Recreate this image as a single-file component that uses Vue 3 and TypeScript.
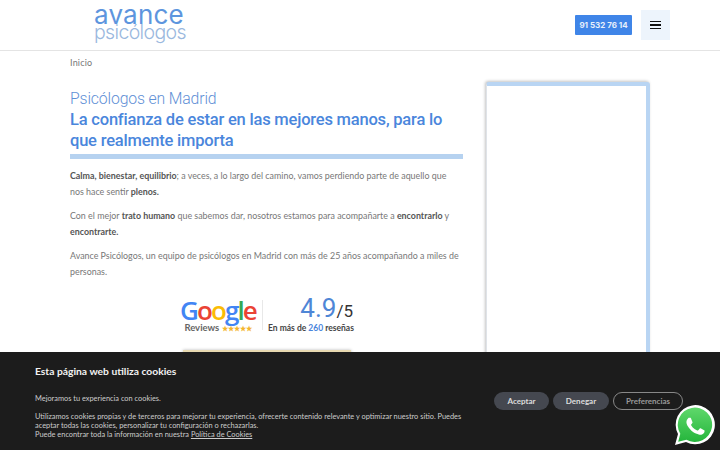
<script setup lang="ts">
const googleLetters: { c: string; col: string }[] = [
  { c: 'G', col: '#4285f4' },
  { c: 'o', col: '#ea4335' },
  { c: 'o', col: '#fbbc05' },
  { c: 'g', col: '#4285f4' },
  { c: 'l', col: '#34a853' },
  { c: 'e', col: '#ea4335' },
]
</script>

<template>
  <div class="page">
    <header class="header">
      <div class="logo">
        <div class="logo-top">avance</div>
        <div class="logo-bottom">psicólogos</div>
      </div>
      <div class="header-actions">
        <a class="phone">91 532 76 14</a>
        <button class="burger" aria-label="Menú">
          <span></span><span></span><span></span>
        </button>
      </div>
    </header>

    <div class="breadcrumb">Inicio</div>

    <main class="main">
      <section class="content">
        <h1 class="title">
          <span class="title-light">Psicólogos en Madrid</span>
          <strong class="title-strong">La confianza de estar en las mejores manos, para lo que realmente importa</strong>
        </h1>
        <div class="rule"></div>
        <p><b>Calma, bienestar, equilibrio</b>; a veces, a lo largo del camino, vamos perdiendo parte de aquello que nos hace sentir <b>plenos.</b></p>
        <p>Con el mejor <b>trato humano</b> que sabemos dar, nosotros estamos para acompañarte a <b>encontrarlo</b> y <b>encontrarte.</b></p>
        <p>Avance Psicólogos, un equipo de psicólogos en Madrid con más de 25 años acompañando a miles de personas.</p>

        <div class="reviews">
          <div class="google">
            <div class="google-word"><span v-for="(l, i) in googleLetters" :key="i" :style="{ color: l.col }">{{ l.c }}</span></div>
            <div class="google-sub">Reviews <span class="stars">★★★★★</span></div>
          </div>
          <div class="divider"></div>
          <div class="score">
            <div class="score-num"><span class="big">4.9</span><span class="out">/5</span></div>
            <div class="score-sub">En más de <span class="blue">260</span> reseñas</div>
          </div>
        </div>
        <div class="gold"></div>
      </section>

      <aside class="sidebar"></aside>
    </main>

    <div class="cookies">
      <div class="cookie-text">
        <div class="cookie-title">Esta página web utiliza cookies</div>
        <div class="cookie-lead">Mejoramos tu experiencia con cookies.</div>
        <div class="cookie-body">Utilizamos cookies propias y de terceros para mejorar tu experiencia, ofrecerte contenido relevante y optimizar nuestro sitio. Puedes aceptar todas las cookies, personalizar tu configuración o rechazarlas.<br />Puede encontrar toda la información en nuestra <u>Política de Cookies</u></div>
      </div>
      <div class="cookie-buttons">
        <button class="cbtn accept">Aceptar</button>
        <button class="cbtn deny">Denegar</button>
        <button class="cbtn prefs">Preferencias</button>
      </div>
    </div>

    <svg class="whatsapp" viewBox="0 0 40 40" aria-label="WhatsApp">
      <defs>
        <linearGradient id="wa" x1="0" y1="0" x2="0" y2="1">
          <stop offset="0" stop-color="#5fd86b" />
          <stop offset="1" stop-color="#25b53c" />
        </linearGradient>
      </defs>
      <path d="M0 40 L3 29 A19.6 19.6 0 1 1 11 37 Z" fill="#fff" />
      <path d="M3.2 36.8 L5.3 28.8 A17.2 17.2 0 1 1 11.4 34.7 Z" fill="url(#wa)" />
      <path d="M14 10.2c-.5-1-1-1-1.5-1h-1.3c-.5 0-1.200.2-1.800.9-.6.7-2.400 2.300-2.400 5.600s2.400 6.500 2.700 7c.3.400 4.700 7.500 11.600 10.200 5.700 2.300 6.900 1.800 8.100 1.700 1.200-.1 4-1.600 4.600-3.200.6-1.600.6-2.900.4-3.200-.2-.3-.6-.5-1.300-.8l-4.600-2.300c-.6-.2-1.100-.3-1.500.4l-2.100 2.600c-.4.4-.8.500-1.400.2-.7-.3-2.900-1.100-5.500-3.400-2-1.800-3.400-4-3.800-4.700-.4-.7 0-1 .3-1.400l1-1.200c.3-.4.400-.7.700-1.100.2-.5.100-.9-.1-1.200L14 10.200z" transform="translate(6.800 6.800) scale(.66)" fill="#fff" />
    </svg>
  </div>
</template>

<style>
html, body { margin: 0; padding: 0; height: 100%; overflow: hidden; background: #fff; }
</style>

<style scoped>
.page {
  width: 720px;
  height: 450px;
  position: relative;
  overflow: hidden;
  background: #fff;
  font-family: Lato, "Liberation Sans", sans-serif;
  color: #666;
}
.header {
  height: 50px;
  border-bottom: 1px solid #e4e4e4;
  display: flex;
  justify-content: space-between;
  padding: 0 50px 0 94px;
}
.logo { width: 92px; padding-top: 5px; font-family: Inter, sans-serif; }
.logo-top { font-size: 26px; line-height: 20px; color: #5d95de; letter-spacing: .2px; }
.logo-bottom { font-size: 19.500px; line-height: 15px; color: #9ab8de; font-weight: 300; letter-spacing: -.65px; }
.header-actions { display: flex; align-items: center; gap: 9px; }
.phone {
  width: 57px;
  height: 20px;
  background: #3f85e8;
  border-radius: 1px;
  color: #e8f0fb;
  font: 700 8px/20px Inter, sans-serif;
  text-align: center;
}
.burger {
  width: 29px;
  height: 30px;
  border: 0;
  background: #edf4fc;
  padding: 0;
  display: flex;
  flex-direction: column;
  align-items: center;
  justify-content: center;
  gap: 2px;
}
.burger span { width: 11px; height: 1.500px; background: #111; display: block; }
.breadcrumb { padding: 7px 70px 0; font: 400 9px/10px Lato, sans-serif; letter-spacing: .2px; color: #777; height: 11px; }
.main { display: flex; padding: 19px 70px 0; gap: 23px; align-items: flex-start; }
.content { width: 393px; flex: none; }
.title { margin: 0; font-size: 16.500px; line-height: 21px; font-weight: 400; font-family: Roboto, sans-serif; }
.title-light { display: block; color: #5f90d6; font-size: 15.800px; font-weight: 300; letter-spacing: -.15px; }
.title-strong { display: block; color: #4a86dc; font-weight: 500; letter-spacing: -.2px; }
.rule { height: 5px; background: #b6d2f0; margin-top: 3px; margin-bottom: 9px; }
p { margin: 0 0 8px; max-width: 390px; font: 400 8.900px/16px Lato, sans-serif; color: #777; }
b { font-weight: 700; color: #555; }
.reviews { display: flex; align-items: center; margin: 17px 0 0 110px; height: 36px; }
.google { width: 76px; text-align: center; }
.google-word { font: 600 26px/25px "Open Sans", sans-serif; letter-spacing: -1.900px; }
.google-sub { font: 700 9.500px/10px Lato, sans-serif; color: #666; white-space: nowrap; }
.stars { color: #f4b52e; font-size: 7px; }
.divider { width: 1px; height: 30px; background: #e8e8e8; margin: 0 5px 0 6px; }
.score { width: 85px; text-align: right; }
.score-num { line-height: 23px; font-family: Roboto, sans-serif; }
.big { font-size: 26px; color: #4f86d6; }
.out { font-size: 17px; color: #333; }
.score-sub { font: 700 8.500px/10px Lato, sans-serif; color: #444; white-space: nowrap; }
.blue { color: #4a86dc; }
.gold {
  width: 168px;
  height: 20px;
  margin: 17px 0 0 113px;
  background: #e7d9b0;
  box-shadow: 0 0 3px #bbb;
}
.sidebar {
  width: 159px;
  height: 300px;
  flex: none;
  margin-top: -6px;
  background: #fff;
  border-style: solid;
  border-color: #b9d5f3 #b9d5f3 #b9d5f3 #dfe3e8;
  border-width: 4px 4px 0 1px;
  border-radius: 3px;
  box-shadow: -1px -1px 3px #c4c4c4;
}
.cookies {
  position: absolute;
  left: 0;
  right: 0;
  bottom: 0;
  height: 98px;
  box-sizing: border-box;
  background: #1c1c1c;
  display: flex;
  justify-content: space-between;
  padding: 13px 37px 0 35px;
  color: #ccc;
}
.cookie-text { width: 430px; }
.cookie-title { font: 700 10.300px/13px Lato, sans-serif; color: #f2f2f2; }
.cookie-lead { font: 400 7.400px/10px Lato, sans-serif; margin-top: 16px; }
.cookie-body { font: 400 7.400px/9px Lato, sans-serif; margin-top: 8px; }
.cookie-buttons { display: flex; gap: 4px; padding-top: 27px; height: 19px; }
.cbtn {
  height: 18px;
  border-radius: 9px;
  border: 1px solid transparent;
  font: 700 8px/16px Lato, sans-serif;
  color: #ddd;
  padding: 0;
  box-sizing: border-box;
  background: #454850;
}
.accept { width: 55px; }
.deny { width: 56px; }
.prefs { width: 70px; background: transparent; border-color: #888; color: #999; }
.whatsapp { position: absolute; left: 675px; top: 405px; width: 40px; height: 40px; }
</style>
